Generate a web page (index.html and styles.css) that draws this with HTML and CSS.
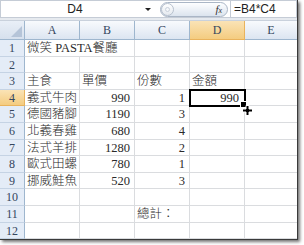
FILE: index.html
```html
<!DOCTYPE html>
<html>
<head>
<meta charset="utf-8">
<link rel="stylesheet" href="styles.css">
</head>
<body>
<div class="window">
  <div class="fbar">
    <div class="namebox"><span class="name">D4</span><span class="arrow"></span></div>
    <div class="fxwrap">
      <div class="capsule"><span class="knob"><span class="dot"></span></span><span class="fx">f<span class="x">x</span></span></div>
    </div>
    <div class="formula">=B4*C4</div>
  </div>
  <div class="gap"></div>
  <div class="sheet">
    <div class="corner"><span class="tri"></span></div>
    <div class="ch">A</div><div class="ch">B</div><div class="ch">C</div><div class="ch hl">D</div><div class="ch last">E</div>

    <div class="rh">1</div><div class="c span2">微笑 PASTA餐廳</div><div class="c"></div><div class="c"></div><div class="c last"></div>
    <div class="rh">2</div><div class="c"></div><div class="c"></div><div class="c"></div><div class="c"></div><div class="c last"></div>
    <div class="rh">3</div><div class="c">主食</div><div class="c">單價</div><div class="c">份數</div><div class="c">金額</div><div class="c last"></div>
    <div class="rh hl">4</div><div class="c">義式牛肉</div><div class="c num">990</div><div class="c num">1</div><div class="c num sel">990</div><div class="c last"></div>
    <div class="rh">5</div><div class="c">德國豬腳</div><div class="c num">1190</div><div class="c num">3</div><div class="c"></div><div class="c last"></div>
    <div class="rh">6</div><div class="c">北義春雞</div><div class="c num">680</div><div class="c num">4</div><div class="c"></div><div class="c last"></div>
    <div class="rh">7</div><div class="c">法式羊排</div><div class="c num">1280</div><div class="c num">2</div><div class="c"></div><div class="c last"></div>
    <div class="rh">8</div><div class="c">歐式田螺</div><div class="c num">780</div><div class="c num">1</div><div class="c"></div><div class="c last"></div>
    <div class="rh">9</div><div class="c">挪威鮭魚</div><div class="c num">520</div><div class="c num">3</div><div class="c"></div><div class="c last"></div>
    <div class="rh">10</div><div class="c"></div><div class="c"></div><div class="c"></div><div class="c"></div><div class="c last"></div>
    <div class="rh">11</div><div class="c"></div><div class="c"></div><div class="c">總計：</div><div class="c"></div><div class="c last"></div>
    <div class="rh">12</div><div class="c"></div><div class="c"></div><div class="c"></div><div class="c"></div><div class="c last"></div>
  </div>
  <svg class="cursor" width="11" height="11" viewBox="0 0 11 11">
    <path d="M4 0.5h3v3.5h3.5v3h-3.5v3.5h-3v-3.5h-3.5v-3h3.5z" fill="#000" stroke="#fff" stroke-width="1"/>
  </svg>
</div>
</body>
</html>
```
FILE: styles.css
```css
* { box-sizing: border-box; }
html, body { margin: 0; padding: 0; background: #fff; }
body { width: 304px; height: 245px; overflow: hidden; }

.window {
  position: relative;
  width: 298px;
  height: 240px;
  background: #fff;
  border-right: 1px solid #3a3a3a;
  border-bottom: 1px solid #3a3a3a;
  box-shadow: 2px 2px 3px rgba(0,0,0,0.55);
  overflow: visible;
}

.fbar {
  display: flex;
  height: 18px;
  background: #fff;
}
.namebox {
  width: 156px;
  display: flex;
  align-items: center;
  border: 1px solid #c5ccd6;
  border-right: none;
  font: 12px "Liberation Sans", Arial, sans-serif;
  color: #222;
}
.name { flex: 1; text-align: center; padding-left: 8px; }
.arrow {
  width: 0; height: 0;
  margin: 0 5px 0 4px;
  border-left: 3px solid transparent;
  border-right: 3px solid transparent;
  border-top: 3px solid #222;
}
.fxwrap {
  width: 74px;
  display: flex;
  align-items: center;
  padding-left: 4px;
  border-top: 1px solid #c5ccd6;
  border-bottom: 1px solid #c5ccd6;
}
.capsule {
  position: relative;
  width: 68px;
  height: 15px;
  border-radius: 8px;
  border: 1px solid #aab6c6;
  background: linear-gradient(#fdfeff, #dce4ee);
  display: flex;
  align-items: center;
  justify-content: space-between;
}
.knob {
  width: 13px; height: 13px;
  border-radius: 50%;
  background: linear-gradient(#ffffff, #e4e9ef);
  border: 1px solid #b7c1ce;
  display: flex; align-items: center; justify-content: center;
}
.dot { width: 5px; height: 5px; border-radius: 50%; border: 1px solid #c9d1db; background: #f5f7fa; }
.fx {
  font: italic 11px "Liberation Serif", serif;
  color: #333;
  margin-right: 5px;
}
.fx .x { font-size: 8px; }
.formula {
  flex: 1;
  border: 1px solid #c5ccd6;
  font: 12px "Liberation Sans", Arial, sans-serif;
  color: #222;
  padding-left: 3px;
  line-height: 16px;
}

.gap {
  height: 3px;
  background: #e6eaef;
  border-bottom: 1px solid #c9d1dc;
}

.sheet {
  display: grid;
  grid-template-columns: 25px 55px 55px 55px 55px 52px;
  grid-template-rows: 19px repeat(12, 16.6px);
}

.corner {
  position: relative;
  background: linear-gradient(#e9eff7, #d6e0ed);
  border-right: 1px solid #9eb6ce;
  border-bottom: 1px solid #9eb6ce;
}
.tri {
  position: absolute;
  right: 2px; bottom: 2px;
  width: 0; height: 0;
  border-left: 11px solid transparent;
  border-bottom: 11px solid #b5c4d8;
}

.ch {
  background: linear-gradient(#f8fafd, #dce5f1);
  border-right: 1px solid #9eb6ce;
  border-bottom: 1px solid #9eb6ce;
  font: 12px "Liberation Serif", serif;
  color: #34465e;
  text-align: center;
  line-height: 18px;
}
.ch.last { border-right: none; }
.ch.hl, .rh.hl {
  background: linear-gradient(#fae3b6, #f4cc80);
  border-color: #e9b35d;
}

.rh {
  background: #e4ecf7;
  border-right: 1px solid #9eb6ce;
  border-bottom: 1px solid #c5d3e4;
  font: 12px "Liberation Serif", serif;
  color: #34465e;
  text-align: center;
  line-height: 17px;
}

.c {
  border-right: 1px solid #dadcdf;
  border-bottom: 1px solid #dadcdf;
  font: 300 12.5px "Liberation Serif", "Noto Sans CJK TC", serif;
  color: #2a2a2a;
  white-space: nowrap;
  padding: 0 2px 0 2px;
  line-height: 16px;
  overflow: visible;
}
.c.last { border-right: none; }
.c.span2 { grid-column: span 2; }
.num { text-align: right; padding-right: 4px; }

.sel {
  position: relative;
  z-index: 2;
  outline: 2px solid #000;
  outline-offset: -1px;
  padding-right: 5px;
}
.sel::after {
  content: "";
  position: absolute;
  right: -3px;
  bottom: -3px;
  width: 5px;
  height: 5px;
  background: #000;
  border: 1px solid #fff;
}

.cursor {
  position: absolute;
  left: 242px;
  top: 105px;
  z-index: 5;
}
```
